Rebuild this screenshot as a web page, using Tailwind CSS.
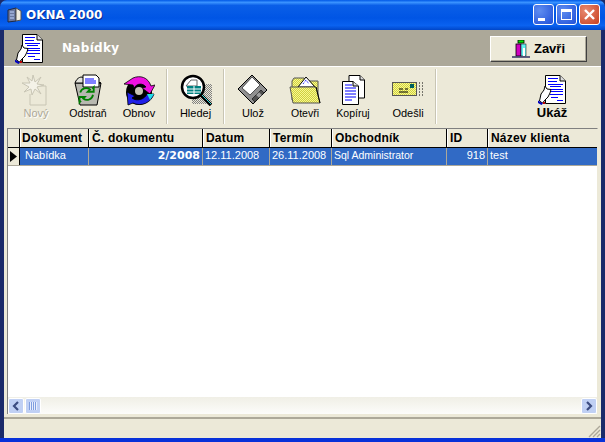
<!DOCTYPE html>
<html lang="en">
<head>
<meta charset="UTF-8">
<title>OKNA 2000</title>
<script src="https://cdn.jsdelivr.net/npm/@tailwindcss/browser@4"></script>
</head>
<body class="bg-[#1a2a6a] overflow-hidden">
<svg width="0" height="0" class="absolute">
  <defs>
    <pattern id="dith" width="2" height="2" patternUnits="userSpaceOnUse"><rect width="2" height="2" fill="#f8f890"/><rect width="1" height="1" fill="#d0d040"/><rect x="1" y="1" width="1" height="1" fill="#d0d040"/></pattern>
    <pattern id="grey" width="2" height="2" patternUnits="userSpaceOnUse"><rect width="2" height="2" fill="#ece9d8"/><rect width="1" height="1" fill="#808080"/><rect x="1" y="1" width="1" height="1" fill="#808080"/></pattern>
    <symbol id="dochand" viewBox="0 0 28 30">
      <path d="M7.500 .5H22L27.500 6V28.500H7.500Z" fill="#fff" stroke="#000"/>
      <path d="M22 .5V6H27.500" fill="#ddd" stroke="#000"/>
      <path d="M10 3.500h10M10 6.500h9M10 9.500h15M12 11.500h11M12 14.500h13M12 16.500h13M12 19.500h13M13 22.500h7M19 25.500h6" stroke="#00f" fill="none"/>
      <path d="M1.500 26 3 19 6 15 7 11 9 14 13 14.500 12 18 10 22 7 25 4.500 28Z" fill="#fff" stroke="#000"/>
      <path d="M0 25.500 5 28.500 3.500 30 0 28Z" fill="#0000c0"/>
      <rect x="5" y="27" width="2" height="2" fill="#c00000"/>
    </symbol>
  </defs>
</svg>

<div class="w-[605px] h-[442px] flex flex-col rounded-t-[7px] overflow-hidden font-['Liberation_Sans',sans-serif] text-[11px] text-black">
  <!-- title bar -->
  <div class="h-[30px] shrink-0 flex items-center pl-[6px] pr-[5px] bg-[linear-gradient(180deg,#0058e6_0%,#3a93ff_8%,#0a5fe8_18%,#0055e5_60%,#0a62f0_85%,#0046c8_100%)]">
    <svg width="16" height="16" viewBox="0 0 16 16" class="shrink-0 mt-[-1px]">
      <path d="M2 3 10 1V14L2 15Z" fill="#6a78a0" stroke="#202840"/>
      <path d="M10 1 15 4V13L10 14Z" fill="#f0ece0" stroke="#505050"/>
      <path d="M4 5h4M4 8h4M4 11h4" stroke="#c0d4ff"/>
    </svg>
    <span class="ml-[4px] text-white font-bold text-[12px] font-['DejaVu_Sans',sans-serif] [text-shadow:1px_1px_#0a2a90]">OKNA 2000</span>
    <div class="ml-auto flex gap-[2px] mt-[-1px]">
      <div class="w-[21px] h-[21px] rounded-[3px] border border-white bg-[radial-gradient(circle_at_30%_30%,#5f8df0,#2050d8)] relative">
        <div class="absolute left-[4px] bottom-[3px] w-[7px] h-[3px] bg-white"></div>
      </div>
      <div class="w-[21px] h-[21px] rounded-[3px] border border-white bg-[radial-gradient(circle_at_30%_30%,#5f8df0,#2050d8)] flex items-center justify-center">
        <div class="w-[11px] h-[11px] border border-white border-t-[3px]"></div>
      </div>
      <div class="w-[21px] h-[21px] rounded-[3px] border border-white bg-[radial-gradient(circle_at_30%_30%,#e88a70,#c84020)] flex items-center justify-center">
        <svg width="11" height="11" viewBox="0 0 11 11"><path d="M1 1 10 10M10 1 1 10" stroke="#fff" stroke-width="2.400"/></svg>
      </div>
    </div>
  </div>

  <div class="flex-1 min-h-0 flex flex-col mx-[4px] bg-[#ece9d8]">
    <!-- header band -->
    <div class="h-[37px] shrink-0 flex items-center bg-[#aca899] pl-[11px] pr-[14px] border-b border-[#fff]">
      <svg width="28" height="30" class="shrink-0 mt-[1px]"><use href="#dochand"/></svg>
      <span class="ml-[19px] text-white font-bold text-[12px] font-['DejaVu_Sans',sans-serif] tracking-[.3px]">Nabídky</span>
      <div class="ml-auto w-[97px] h-[26px] mt-[1px] flex items-center justify-center gap-[4px] bg-[#ece9d8] border border-t-white border-l-white border-r-[#404040] border-b-[#404040] shadow-[inset_-1px_-1px_#aca899]">
        <svg width="18" height="18" viewBox="0 0 18 18">
          <rect x="6" y="0" width="6" height="3" fill="#00e000" stroke="#000" stroke-width=".8"/>
          <rect x="4" y="4" width="5" height="12" fill="#d000c0" stroke="#000" stroke-width=".8"/>
          <rect x="9" y="4" width="5" height="12" fill="#60f0f0" stroke="#000" stroke-width=".5"/>
          <path d="M0 17H18" stroke="#303060" stroke-width="1.500"/>
          <path d="M12 8v8" stroke="#fff" stroke-width="2"/>
        </svg>
        <span class="font-bold text-[13px]">Zavři</span>
      </div>
    </div>

    <!-- toolbar -->
    <div class="h-[58px] shrink-0 flex pl-[6px] pt-[6px] border-t border-[#ece9d8] leading-[14px]">
      <div class="w-[52px] flex flex-col items-center text-[#aca899]">
        <svg width="32" height="32" viewBox="0 0 32 32">
          <path d="M16 12H26V31H10V20" fill="none" stroke="#c8c5b4"/>
          <path d="M13 1 15 8 21 3 17 10 24 11 17 13 21 20 15 15 12 21 11 15 4 18 9 13 2 9 10 9 7 3 12 7Z" fill="#f4f2e8" stroke="#c8c5b4"/>
        </svg>
        <span class="[text-shadow:1px_1px_#fff]">Nový</span>
      </div>
      <div class="w-[52px] flex flex-col items-center">
        <svg width="32" height="32" viewBox="0 0 32 32">
          <path d="M3 9 29 9 25 31H8Z" fill="#b8b8b0" stroke="#000"/>
          <path d="M3 9 C5 3 10 2 12 4L26 8 29 9Z" fill="#e4e4dc" stroke="#000"/>
          <path d="M11 1H24L27 4V13H11Z" fill="#fff" stroke="#000"/>
          <path d="M13 5h9M13 7h11M13 9h11" stroke="#00f"/>
          <path d="M7 18A8 8 0 0 1 20 14l-3 3h8v-6l-2 2M24 21a8 8 0 0 1-13 5l2-2H6v7l2-2" fill="none" stroke="#008000" stroke-width="2.400" transform="translate(3 5) scale(.75)"/>
        </svg>
        <span class="text-[10.5px]">Odstraň</span>
      </div>
      <div class="w-[50px] flex flex-col items-center">
        <svg width="32" height="32" viewBox="0 0 32 32">
          <circle cx="16" cy="18" r="13" fill="#000"/>
          <path d="M1 10 10 4C17 1 25 3 28 12L32 11 27 20 19 14 23 13C20 9 14 9 11 14L10 11Z" fill="#f010e0" stroke="#000" stroke-width=".8"/>
          <path d="M4 18 12 22 9 24C14 28 22 25 24 20L31 20C28 29 18 33 10 29L5 31Z" fill="#2020e8" stroke="#000" stroke-width=".8"/>
          <path d="M24 20 31 20 27 26Z" fill="#20e0e8"/>
          <circle cx="16" cy="17" r="4" fill="#c8c5b4"/>
        </svg>
        <span>Obnov</span>
      </div>
      <div class="w-[2px] h-[55px] -mt-[5px] bg-[#c8c5b4] border-r border-white ml-[2px]"></div>
      <div class="w-[55px] flex flex-col items-center">
        <svg width="32" height="32" viewBox="0 0 32 32">
          <rect x="12" y="10" width="20" height="20" fill="url(#grey)"/>
          <circle cx="13" cy="13" r="11" fill="#fff" stroke="#000" stroke-width="2.500"/>
          <path d="M6 12 11 6H17V12Z" fill="#fff" stroke="#666"/>
          <path d="M7 12H21V20H7Z" fill="#008080"/>
          <path d="M7 15H21M7 18H21M14 12V20" stroke="#fff"/>
          <path d="M21 21 31 31" stroke="#000" stroke-width="3.500"/>
          <path d="M22 21 31 30" stroke="#40e0e0"/>
        </svg>
        <span>Hledej</span>
      </div>
      <div class="w-[2px] h-[55px] -mt-[5px] bg-[#c8c5b4] border-r border-white"></div>
      <div class="w-[56px] flex flex-col items-center">
        <svg width="32" height="32" viewBox="0 0 32 32">
          <path d="M15 1 30 16 16 30 1 15Z" fill="#909090" stroke="#000"/>
          <path d="M15 3 23 11 13 21 5 14Z" fill="#fff" stroke="#000" stroke-width=".6"/>
          <path d="M15 25 24 16 27 19 18 28Z" fill="#505050" stroke="#000" stroke-width=".6"/>
          <rect x="20" y="19" width="4" height="4" transform="rotate(45 22 21)" fill="#a0a0a0"/>
        </svg>
        <span>Ulož</span>
      </div>
      <div class="w-[48px] flex flex-col items-center">
        <svg width="32" height="32" viewBox="0 0 32 32">
          <path d="M3 7 5 4H15L17 7H29V26H3Z" fill="url(#dith)" stroke="#555"/>
          <path d="M9 13 17 3 26 13Z" fill="#fff" stroke="#000"/>
          <path d="M14 10 17 6 20 10" fill="none" stroke="#00f" stroke-dasharray="1 1"/>
          <path d="M1 13H27L31 29H4Z" fill="url(#dith)" stroke="#555"/>
          <path d="M27 13 31 29" stroke="#000"/>
        </svg>
        <span class="text-[10.5px]">Otevři</span>
      </div>
      <div class="w-[48px] flex flex-col items-center">
        <svg width="32" height="32" viewBox="0 0 32 32">
          <path d="M12 1.500H23L27.500 6V24H12Z" fill="#fff" stroke="#000"/>
          <path d="M5.500 7.500H16L21.500 12V30.500H5.500Z" fill="#fff" stroke="#000"/>
          <path d="M16 7.500V12H21.500M23 1.500V6H27.500" fill="#ddd" stroke="#000"/>
          <path d="M8 11h7M8 14h11M8 17h11M8 20h11M8 23h11M8 26h7" stroke="#00f"/>
        </svg>
        <span class="text-[10.5px]">Kopíruj</span>
      </div>
      <div class="w-[54px] ml-[4px] flex flex-col items-center">
        <svg width="32" height="32" viewBox="0 0 32 32">
          <rect x="0.500" y="8.500" width="24" height="13" fill="url(#dith)" stroke="#555"/>
          <path d="M7 15h4M13 15h3M7 18h9" stroke="#000"/>
          <rect x="18" y="10" width="4" height="4" fill="#006060"/>
          <path d="M27 9h1M30 9h1M27 12h1M30 12h1M27 15h1M30 15h1M27 18h1M30 18h1M27 21h1M30 21h1" stroke="#000"/>
        </svg>
        <span>Odešli</span>
      </div>
      <div class="w-[2px] h-[55px] -mt-[5px] bg-[#c8c5b4] border-r border-white"></div>
      <div class="w-[52px] ml-[89px] flex flex-col items-center">
        <svg width="28" height="30" class="mt-[1px] mb-[1px]"><use href="#dochand"/></svg>
        <span class="font-bold text-[13px]">Ukáž</span>
      </div>
    </div>

    <!-- grid -->
    <div class="flex-1 min-h-0 mx-[3px] mt-[3px] flex flex-col bg-white border-t border-l border-[#808080] border-r border-r-[#ece9d8]">
      <div class="h-[19px] shrink-0 flex bg-[#ece9d8] border-b border-black font-bold text-[12px] tracking-[.2px] leading-[18px] whitespace-nowrap">
        <div class="w-[12px] border-r border-black"></div>
        <div class="w-[69px] pl-[1px] border-r border-black border-l border-l-white">Dokument</div>
        <div class="w-[114px] pl-[2px] border-r border-black border-l border-l-white">Č. dokumentu</div>
        <div class="w-[67px] pl-[2px] border-r border-black border-l border-l-white">Datum</div>
        <div class="w-[62px] pl-[2px] border-r border-black border-l border-l-white">Termín</div>
        <div class="w-[115px] pl-[2px] border-r border-black border-l border-l-white">Obchodník</div>
        <div class="w-[41px] pl-[2px] border-r border-black border-l border-l-white">ID</div>
        <div class="flex-1 pl-[2px] border-l border-l-white">Název klienta</div>
      </div>
      <div class="h-[18px] shrink-0 flex bg-[#316ac5] text-white leading-[15px] whitespace-nowrap border-b border-[#aca899]">
        <div class="w-[12px] bg-[#ece9d8] border-r border-black flex items-center justify-center">
          <svg width="7" height="11" viewBox="0 0 7 11"><path d="M0 0 7 5.500 0 11Z" fill="#000"/></svg>
        </div>
        <div class="w-[69px] pl-[5px] border-r border-[#aca899]">Nabídka</div>
        <div class="w-[114px] pr-[2px] text-right font-bold font-['DejaVu_Sans',sans-serif] border-r border-[#aca899]">2/2008</div>
        <div class="w-[67px] pl-[2px] border-r border-[#aca899]">12.11.2008</div>
        <div class="w-[62px] pl-[2px] border-r border-[#aca899]">26.11.2008</div>
        <div class="w-[115px] pl-[2px] border-r border-[#aca899] text-[10.5px]">Sql Administrator</div>
        <div class="w-[41px] pr-[2px] text-right border-r border-[#aca899]">918</div>
        <div class="flex-1 pl-[2px]">test</div>
      </div>
      <div class="flex-1 min-h-0"></div>
      <!-- scrollbar -->
      <div class="h-[17px] shrink-0 flex items-center bg-[linear-gradient(180deg,#f0efe6,#fcfcfa)]">
        <div class="w-[16px] h-[16px] rounded-[2px] border border-white bg-[#c0d0f4] flex items-center justify-center">
          <svg width="8" height="10" viewBox="0 0 8 10"><path d="M6 1 2 5 6 9" fill="none" stroke="#3c4c80" stroke-width="2.200"/></svg>
        </div>
        <div class="w-[16px] h-[16px] ml-[1px] rounded-[2px] border border-white bg-[#c0d0f4] flex items-center justify-center">
          <div class="w-[8px] h-[8px] bg-[repeating-linear-gradient(90deg,#7f9ee0_0_1px,#e8eefc_1px_2px)]"></div>
        </div>
        <div class="ml-auto w-[16px] h-[16px] rounded-[2px] border border-white bg-[#c0d0f4] flex items-center justify-center">
          <svg width="8" height="10" viewBox="0 0 8 10"><path d="M2 1 6 5 2 9" fill="none" stroke="#3c4c80" stroke-width="2.200"/></svg>
        </div>
      </div>
    </div>

    <!-- status bar -->
    <div class="h-[21px] shrink-0 mt-[3px] border-t-2 border-[#aca899] relative">
      <svg width="13" height="13" viewBox="0 0 13 13" class="absolute right-0 bottom-0">
        <path d="M12 1 1 12M12 5 5 12M12 9 9 12" stroke="#aca899" stroke-width="1.400"/>
      </svg>
    </div>
  </div>
  <div class="h-[4px] shrink-0 bg-[#0831d9]"></div>
</div>
</body>
</html>
